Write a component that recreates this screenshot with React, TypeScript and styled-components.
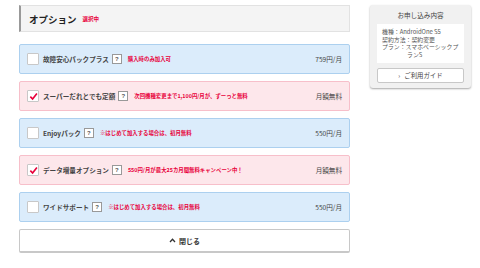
import React from 'react';
import styled, {createGlobalStyle} from 'styled-components';

const GlobalStyle = createGlobalStyle`
  body {
    margin: 0;
    background: #fff;
    font-family: "Noto Sans CJK JP", "Noto Sans", sans-serif;
    color: #333;
  }
`;

const Page = styled.div`
  display: flex;
  align-items: flex-start;
  padding: 5px 9px 0 19px;
  gap: 20px;
`;

const Main = styled.div`
  width: 331px;
  display: flex;
  flex-direction: column;
`;

const Header = styled.div`
  height: 27px;
  box-sizing: border-box;
  background: #f4f4f4;
  border: 1px solid #e2e2e2;
  border-left: 2px solid #999;
  display: flex;
  align-items: center;
  padding-left: 8px;
  gap: 6px;
  margin-bottom: 12px;
`;

const Title = styled.span`
  font-size: 9.5px;
  font-weight: bold;
  color: #222;
`;

const Selected = styled.span`
  font-size: 5.5px;
  font-weight: bold;
  color: #e8003a;
  margin-top: 1px;
`;

const List = styled.div`
  display: flex;
  flex-direction: column;
  gap: 7px;
`;

const Row = styled.div<{checked: boolean}>`
  height: 30px;
  box-sizing: border-box;
  border-radius: 2px;
  border: 1px solid ${(p) => (p.checked ? '#f7bfca' : '#acd0ef')};
  background: ${(p) => (p.checked ? '#fde7eb' : '#dbecfb')};
  display: flex;
  align-items: center;
  padding: 0 7px 0 7px;
`;

const Box = styled.span`
  width: 10px;
  height: 10px;
  background: #fff;
  border: 1px solid #c8c8c8;
  border-radius: 1px;
  display: flex;
  align-items: center;
  justify-content: center;
  margin-right: 4px;
  flex-shrink: 0;
`;

const Name = styled.span`
  font-size: 6.6px;
  font-weight: bold;
  color: #444;
  margin-right: 3px;
`;

const Help = styled.span`
  width: 8px;
  height: 8px;
  border: 1px solid #999;
  background: #fff;
  font-size: 6px;
  line-height: 8px;
  text-align: center;
  color: #555;
  font-family: "Liberation Sans", sans-serif;
  font-weight: bold;
  margin-right: 6px;
`;

const Note = styled.span`
  font-size: 5.4px;
  font-weight: bold;
  color: #e8003a;
`;

const Price = styled.span`
  margin-left: auto;
  font-size: 6.6px;
  color: #444;
`;

const CloseButton = styled.div`
  margin-top: 7px;
  height: 24px;
  box-sizing: border-box;
  border: 1px solid #c8c8c8;
  border-bottom-width: 2px;
  border-radius: 2px;
  background: #fff;
  display: flex;
  align-items: center;
  justify-content: center;
  gap: 3px;
  font-size: 7px;
  font-weight: bold;
  color: #333;
`;

const Side = styled.div`
  width: 101px;
  box-sizing: border-box;
  background: #f1f1f1;
  border-radius: 3px;
  box-shadow: 0 1px 2px rgba(0, 0, 0, 0.35);
  padding: 0 7px 5px 7px;
`;

const SideTitle = styled.div`
  height: 19px;
  display: flex;
  align-items: center;
  justify-content: center;
  font-size: 6.6px;
  color: #444;
`;

const Summary = styled.div`
  background: #fff;
  padding: 4px 5px;
  font-size: 5.9px;
  line-height: 7.6px;
  color: #555;
  height: 39px;
  box-sizing: border-box;
`;

const Indent = styled.div`
  padding-left: 25px;
`;

const Guide = styled.div`
  margin-top: 5px;
  height: 15px;
  box-sizing: border-box;
  background: #fff;
  border: 1px solid #c8c8c8;
  border-radius: 2px;
  display: flex;
  align-items: center;
  justify-content: center;
  gap: 4px;
  font-size: 6.4px;
  color: #444;
`;

const Check = () => (
  <svg width="9" height="9" viewBox="0 0 10 10">
    <path d="M1.5 5.2 L4 7.8 L8.8 1.6" fill="none" stroke="#e8003a" strokeWidth="1.8" />
  </svg>
);

const options = [
  {name: '故障安心パックプラス', note: '購入時のみ加入可', price: '759円/月', checked: false},
  {name: 'スーパーだれとでも定額', note: '次回機種変更まで1,100円/月が、ずーっと無料', price: '月額無料', checked: true},
  {name: 'Enjoyパック', note: '※はじめて加入する場合は、初月無料', price: '550円/月', checked: false},
  {name: 'データ増量オプション', note: '550円/月が最大25カ月間無料キャンペーン中！', price: '月額無料', checked: true},
  {name: 'ワイドサポート', note: '※はじめて加入する場合は、初月無料', price: '550円/月', checked: false},
];

const App = () => {
  return (
    <>
      <GlobalStyle />
      <Page>
        <Main>
          <Header>
            <Title>オプション</Title>
            <Selected>選択中</Selected>
          </Header>
          <List>
            {options.map((o, idx) => (
              <Row key={idx} checked={o.checked}>
                <Box>{o.checked && <Check />}</Box>
                <Name>{o.name}</Name>
                <Help>?</Help>
                <Note>{o.note}</Note>
                <Price>{o.price}</Price>
              </Row>
            ))}
          </List>
          <CloseButton>
            <svg width="7" height="5" viewBox="0 0 7 5">
              <path d="M1 4 L3.5 1.3 L6 4" fill="none" stroke="#333" strokeWidth="1.3" />
            </svg>
            閉じる
          </CloseButton>
        </Main>
        <Side>
          <SideTitle>お申し込み内容</SideTitle>
          <Summary>
            <div>機種：AndroidOne S5</div>
            <div>契約方法：契約変更</div>
            <div>プラン：スマホベーシックプ</div>
            <Indent>ランS</Indent>
          </Summary>
          <Guide>
            <span>›</span>
            ご利用ガイド
          </Guide>
        </Side>
      </Page>
    </>
  );
};

export default App;
